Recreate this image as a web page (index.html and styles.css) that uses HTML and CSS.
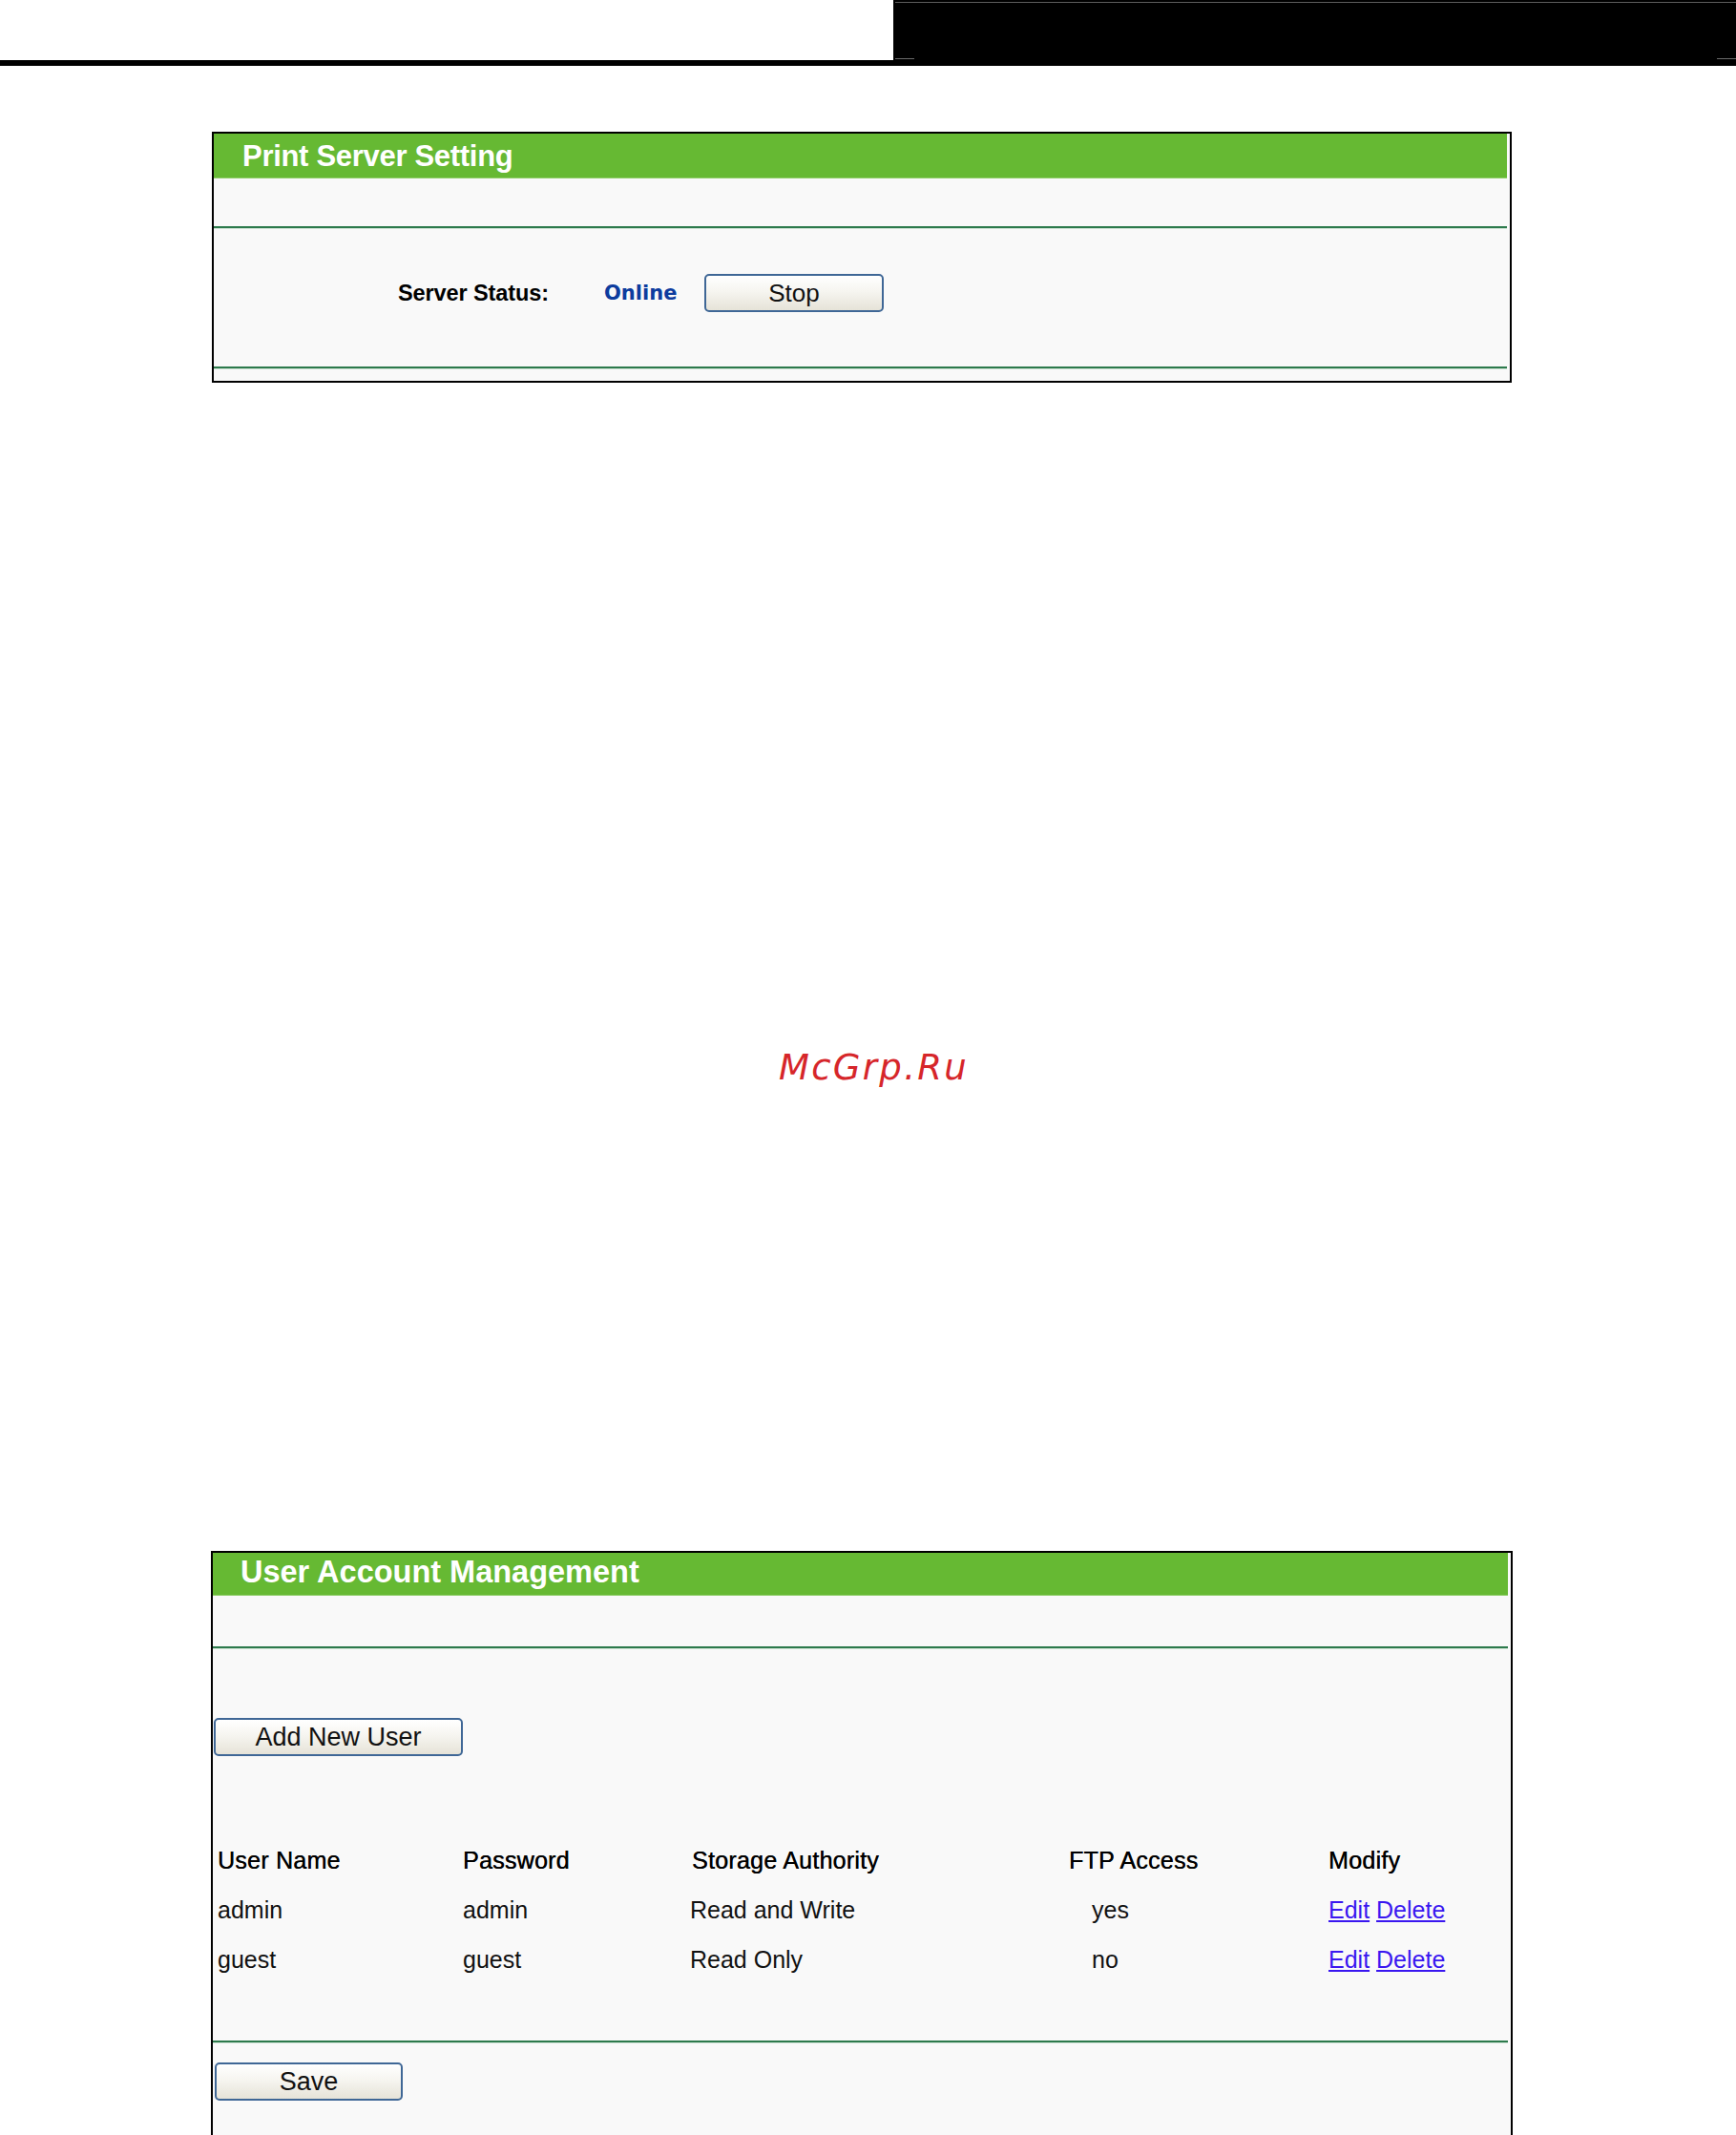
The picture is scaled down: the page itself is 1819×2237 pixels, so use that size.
FILE: index.html
```html
<!DOCTYPE html>
<html>
<head>
<meta charset="utf-8">
<title>Print Server Setting</title>
<link rel="stylesheet" href="styles.css">
</head>
<body>
<header class="page-head">
  <div class="head-left"></div>
  <div class="head-right">
    <div class="head-line"></div>
    <div class="head-ticks"><span class="tick"></span><span class="tick"></span></div>
  </div>
</header>
<div class="head-rule"></div>

<main class="page">
  <section class="panel panel-print">
    <div class="panel-title">Print Server Setting</div>
    <div class="panel-gap"></div>
    <div class="rule"></div>
    <div class="status-body">
      <div class="status-row">
        <span class="status-label">Server Status:</span>
        <span class="status-value">Online</span>
        <button class="btn btn-stop" type="button">Stop</button>
      </div>
    </div>
    <div class="rule"></div>
    <div class="panel-foot"></div>
  </section>

  <div class="watermark">McGrp.Ru</div>

  <section class="panel panel-users">
    <div class="panel-title panel-title-users">User Account Management</div>
    <div class="panel-gap panel-gap-users"></div>
    <div class="rule"></div>
    <div class="users-body">
      <button class="btn btn-add" type="button">Add New User</button>
      <div class="user-table">
        <div class="cell head">User Name</div>
        <div class="cell head">Password</div>
        <div class="cell head">Storage Authority</div>
        <div class="cell head">FTP Access</div>
        <div class="cell head">Modify</div>

        <div class="cell">admin</div>
        <div class="cell">admin</div>
        <div class="cell cell-auth">Read and Write</div>
        <div class="cell cell-ftp">yes</div>
        <div class="cell"><a href="#" class="lnk">Edit</a> <a href="#" class="lnk">Delete</a></div>

        <div class="cell">guest</div>
        <div class="cell">guest</div>
        <div class="cell cell-auth">Read Only</div>
        <div class="cell cell-ftp">no</div>
        <div class="cell"><a href="#" class="lnk">Edit</a> <a href="#" class="lnk">Delete</a></div>
      </div>
    </div>
    <div class="rule"></div>
    <div class="users-foot">
      <button class="btn btn-save" type="button">Save</button>
    </div>
  </section>
</main>
</body>
</html>
```

FILE: styles.css
```css
* { box-sizing: border-box; }

html, body {
  margin: 0;
  padding: 0;
  background: #ffffff;
  font-family: "Liberation Sans", Arial, sans-serif;
  color: #000;
}

body {
  width: 1819px;
  height: 2237px;
  overflow: hidden;
}

/* ---------- page header ---------- */
.page-head {
  display: flex;
  height: 63px;
}
.head-left { width: 936px; }
.head-right {
  flex: 1;
  background: #000;
  display: flex;
  flex-direction: column;
  padding-left: 2px;
}
.head-line {
  margin-top: 2px;
  height: 1px;
  background: #5c5c5c;
}
.head-ticks {
  margin-top: auto;
  margin-bottom: 1px;
  display: flex;
  justify-content: space-between;
}
.tick {
  width: 20px;
  height: 1px;
  background: #6a6a6a;
}
.head-rule {
  height: 6px;
  background: #000;
}

/* ---------- panels ---------- */
.page {
  padding-left: 222px;
  padding-top: 69px;
}

.panel {
  border: 2px solid #000;
  background: #f9f9f9;
  padding-right: 3px;
}
.panel-print {
  width: 1362px;
}
.panel-users {
  width: 1364px;
  margin-left: -1px;
}

.panel-title {
  height: 47px;
  line-height: 47px;
  background: #66b933;
  border-bottom: 1px solid #8fcd6a;
  color: #fff;
  font-weight: bold;
  font-size: 31px;
  padding-left: 30px;
  letter-spacing: -0.3px;
}
.panel-title-users {
  height: 45px;
  line-height: 41px;
  font-size: 32.5px;
  letter-spacing: 0;
  padding-left: 29px;
}

.panel-gap { height: 50px; }
.panel-gap-users { height: 53px; }

.rule {
  height: 3px;
  border-top: 2px solid #2d7a4c;
  border-bottom: 1px solid #cfe3d5;
}

.panel-foot { height: 12px; }

/* ---------- print server status ---------- */
.status-body {
  height: 144px;
  display: flex;
  align-items: center;
  padding-bottom: 10px;
}
.status-row {
  display: grid;
  grid-template-columns: 216px 105px 188px;
  align-items: center;
  padding-left: 193px;
}
.status-label {
  font-weight: bold;
  font-size: 23.5px;
  letter-spacing: -0.1px;
}
.status-value {
  font-family: "DejaVu Sans", Verdana, sans-serif;
  font-weight: bold;
  font-size: 21px;
  color: #0d3c9e;
}

/* ---------- buttons ---------- */
.btn {
  font-family: "Liberation Sans", Arial, sans-serif;
  font-size: 26px;
  color: #111;
  height: 40px;
  padding: 0;
  border: 2px solid #3f6796;
  border-radius: 5px;
  background: linear-gradient(#ffffff 0%, #f6f5f0 45%, #e6e3d8 100%);
  line-height: 34px;
}
.btn-stop { width: 188px; }
.btn-add {
  width: 261px;
  font-size: 27px;
  margin-left: 1px;
}
.btn-save {
  width: 197px;
  font-size: 27px;
}

/* ---------- watermark ---------- */
.watermark {
  margin-top: 693px;
  margin-left: 594px;
  height: 50px;
  line-height: 50px;
  font-family: "DejaVu Sans", sans-serif;
  font-style: oblique;
  font-size: 37px;
  letter-spacing: 2.3px;
  color: #d6262a;
  margin-bottom: 481px;
}

/* ---------- users ---------- */
.users-body {
  padding-top: 72px;
  padding-bottom: 59px;
}
.user-table {
  margin-top: 83px;
  display: grid;
  grid-template-columns: 257px 240px 395px 272px 1fr;
  grid-auto-rows: 52px;
  padding-left: 5px;
  font-size: 25px;
}
.cell {
  line-height: 52px;
  white-space: nowrap;
  color: #111;
}
.cell.head {
  color: #000;
  letter-spacing: 0.25px;
  text-shadow: 0.3px 0 0 #000;
}
.cell-auth { margin-left: -2px; }
.cell-ftp { padding-left: 24px; }

.lnk {
  color: #3a17f0;
  text-decoration: underline;
}

.users-foot {
  padding-top: 20px;
  padding-left: 2px;
  height: 97px;
}
```
